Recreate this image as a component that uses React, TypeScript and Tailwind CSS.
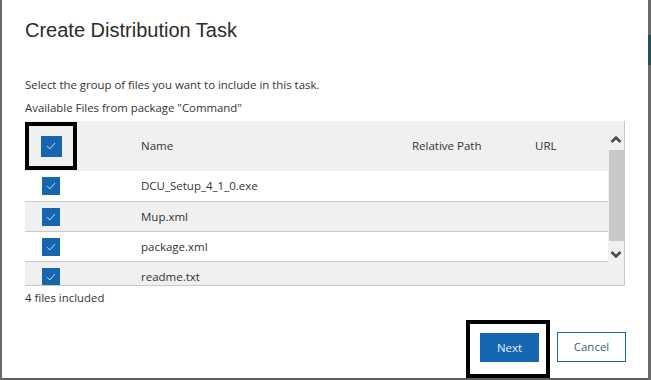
import React from "react";

const files = [
  { name: "DCU_Setup_4_1_0.exe", shade: false },
  { name: "Mup.xml", shade: true },
  { name: "package.xml", shade: false },
  { name: "readme.txt", shade: true },
];

const Check = ({ size }: { size: number }) => (
  <div
    className="bg-[#1565b0] flex items-center justify-center shrink-0"
    style={{ width: size, height: size }}
  >
    <svg width="10" height="8" viewBox="0 0 10 8" fill="none">
      <path d="M1 4.2 L3.8 7 L9 1" stroke="#cfe0f3" strokeWidth="1" />
    </svg>
  </div>
);

const App: React.FC = () => {
  return (
    <div className="w-[651px] h-[380px] bg-[#5e5e5e] flex overflow-hidden font-['Open_Sans',sans-serif] text-[#222]">
      {/* left strip */}
      <div className="w-[2px] h-full bg-[#6a6a6a]" />

      {/* dialog */}
      <div className="w-[646px] h-[378px] bg-white flex flex-col px-[23px]">
        <h2 className="mt-[16px] text-[20px] leading-[28px] font-['Liberation_Sans',sans-serif] text-[#2b2b2b]">
          Create Distribution Task
        </h2>

        <p className="mt-[33px] text-[11.4px] leading-[16px] text-[#333]">
          Select the group of files you want to include in this task.
        </p>
        <p className="mt-[7px] text-[11.4px] leading-[16px] text-[#333]">
          Available Files from package "Command"
        </p>

        {/* file table */}
        <div className="mt-[5px] w-[600px] h-[165px] border-r border-b border-[#c8c8c8] flex">
          <div className="flex-1 flex flex-col">
            <div className="h-[50px] bg-[#f0f0f0] flex items-center text-[11.5px] text-[#333]">
              <div className="w-[52px] h-[48px] border-4 border-black flex items-center justify-center">
                <Check size={21} />
              </div>
              <span className="ml-[64px] w-[271px]">Name</span>
              <span className="w-[123px]">Relative Path</span>
              <span>URL</span>
            </div>
            <div className="flex-1 overflow-hidden">
              {files.map((f, i) => (
                <div
                  key={f.name}
                  className={`h-[30px] flex items-center text-[11.5px] text-[#333] ${
                    f.shade ? "bg-[#f0f0f0]" : "bg-white"
                  } ${i > 0 ? "border-t border-[#c8c8c8]" : ""}`}
                >
                  <div className="w-[52px] flex justify-center">
                    <Check size={18} />
                  </div>
                  <span className="ml-[64px]">{f.name}</span>
                </div>
              ))}
            </div>
          </div>

          {/* scrollbar */}
          <div className="w-[16px] bg-[#f0f0f0] flex flex-col items-center">
            <svg className="mt-[14px]" width="12" height="9" viewBox="0 0 12 9" fill="none">
              <path d="M1.5 7 L6 2.5 L10.5 7" stroke="#4a4a4a" strokeWidth="2.6" />
            </svg>
            <div className="mt-[6px] w-[15px] h-[91px] bg-[#c8c8c8]" />
            <svg className="mt-[9px]" width="12" height="9" viewBox="0 0 12 9" fill="none">
              <path d="M1.5 2 L6 6.5 L10.5 2" stroke="#4a4a4a" strokeWidth="2.6" />
            </svg>
          </div>
        </div>

        <p className="mt-[4px] text-[11.4px] leading-[16px] text-[#333]">4 files included</p>

        {/* footer buttons */}
        <div className="mt-auto flex justify-end items-end gap-[7px] w-[601px]">
          <div className="w-[84px] h-[58px] border-4 border-black flex items-start pt-[9px] pl-[10px]">
            <button className="w-[59px] h-[29px] bg-[#1565b0] text-[#e8f0f8] text-[11.5px]">Next</button>
          </div>
          <button className="mb-[16px] w-[69px] h-[30px] border border-[#1565b0] bg-white text-[#3b5f82] text-[11.5px]">
            Cancel
          </button>
        </div>
      </div>

      {/* right strip */}
      <div className="w-[3px] h-full bg-[#6a6a6a] flex flex-col">
        <div className="mt-[35px] h-[30px] bg-[#24505e]" />
      </div>
    </div>
  );
};

export default App;
